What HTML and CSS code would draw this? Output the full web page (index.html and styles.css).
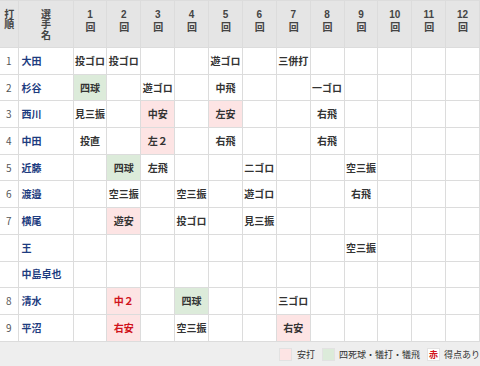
FILE: index.html
```html
<!DOCTYPE html>
<html lang="ja">
<head>
<meta charset="utf-8">
<link rel="stylesheet" href="styles.css">
</head>
<body>
<table class="score">
<colgroup><col class="c-order"><col class="c-name"><col span="12"></colgroup>
<thead>
<tr>
<th><span class="vt">打順</span></th><th><span class="vt">選手名</span></th>
<th><span class="num">1</span><span class="vt">回</span></th>
<th><span class="num">2</span><span class="vt">回</span></th>
<th><span class="num">3</span><span class="vt">回</span></th>
<th><span class="num">4</span><span class="vt">回</span></th>
<th><span class="num">5</span><span class="vt">回</span></th>
<th><span class="num">6</span><span class="vt">回</span></th>
<th><span class="num">7</span><span class="vt">回</span></th>
<th><span class="num">8</span><span class="vt">回</span></th>
<th><span class="num">9</span><span class="vt">回</span></th>
<th><span class="num">10</span><span class="vt">回</span></th>
<th><span class="num">11</span><span class="vt">回</span></th>
<th><span class="num">12</span><span class="vt">回</span></th>
</tr>
</thead>
<tbody>
<tr><td class="no">1</td><td class="nm">大田</td><td>投ゴロ</td><td>投ゴロ</td><td></td><td></td><td>遊ゴロ</td><td></td><td>三併打</td><td></td><td></td><td></td><td></td><td></td></tr>
<tr><td class="no">2</td><td class="nm">杉谷</td><td class="walk">四球</td><td></td><td>遊ゴロ</td><td></td><td>中飛</td><td></td><td></td><td>一ゴロ</td><td></td><td></td><td></td><td></td></tr>
<tr><td class="no">3</td><td class="nm">西川</td><td>見三振</td><td></td><td class="hit">中安</td><td></td><td class="hit">左安</td><td></td><td></td><td>右飛</td><td></td><td></td><td></td><td></td></tr>
<tr><td class="no">4</td><td class="nm">中田</td><td>投直</td><td></td><td class="hit">左２</td><td></td><td>右飛</td><td></td><td></td><td>右飛</td><td></td><td></td><td></td><td></td></tr>
<tr><td class="no">5</td><td class="nm">近藤</td><td></td><td class="walk">四球</td><td>左飛</td><td></td><td></td><td>二ゴロ</td><td></td><td></td><td>空三振</td><td></td><td></td><td></td></tr>
<tr><td class="no">6</td><td class="nm">渡邉</td><td></td><td>空三振</td><td></td><td>空三振</td><td></td><td>遊ゴロ</td><td></td><td></td><td>右飛</td><td></td><td></td><td></td></tr>
<tr><td class="no">7</td><td class="nm">横尾</td><td></td><td class="hit">遊安</td><td></td><td>投ゴロ</td><td></td><td>見三振</td><td></td><td></td><td></td><td></td><td></td><td></td></tr>
<tr><td class="no"></td><td class="nm">王</td><td></td><td></td><td></td><td></td><td></td><td></td><td></td><td></td><td>空三振</td><td></td><td></td><td></td></tr>
<tr><td class="no"></td><td class="nm">中島卓也</td><td></td><td></td><td></td><td></td><td></td><td></td><td></td><td></td><td></td><td></td><td></td><td></td></tr>
<tr><td class="no">8</td><td class="nm">清水</td><td></td><td class="hit red">中２</td><td></td><td class="walk">四球</td><td></td><td></td><td>三ゴロ</td><td></td><td></td><td></td><td></td><td></td></tr>
<tr><td class="no">9</td><td class="nm">平沼</td><td></td><td class="hit red">右安</td><td></td><td>空三振</td><td></td><td></td><td class="hit">右安</td><td></td><td></td><td></td><td></td><td></td></tr>
</tbody>
</table>
<div class="legend">
<span class="sw sw-hit"></span><span class="lt">安打</span>
<span class="sw sw-walk"></span><span class="lt">四死球・犠打・犠飛</span>
<span class="sw sw-red">赤</span><span class="lt">得点あり</span>
</div>
</body>
</html>
```
FILE: styles.css
```css
html, body {
  margin: 0;
  padding: 0;
  background: #eeeeee;
}
body {
  font-family: "Noto Sans CJK JP", "Noto Sans", sans-serif;
  font-size: 10px;
  color: #333;
  width: 480px;
  overflow: hidden;
}
.score {
  border-collapse: collapse;
  table-layout: fixed;
  width: 480px;
  background: #fff;
}
.c-order { width: 18px; }
.c-name { width: 55px; }
.score th, .score td {
  border: 1px solid #dcdcdc;
  padding: 0;
  text-align: center;
  white-space: nowrap;
  overflow: hidden;
}
.score th {
  background: #e5e5e5;
  font-weight: bold;
  vertical-align: top;
  padding-top: 8px;
  height: 38px;
  color: #444;
}
.vt {
  display: inline-block;
  writing-mode: vertical-rl;
  text-orientation: upright;
  letter-spacing: 0.7px;
  line-height: 12px;
}
.num {
  display: block;
  font-family: "Liberation Sans", Arial, sans-serif;
  line-height: 11px;
  margin-bottom: 0.4px;
}
.score td {
  height: 25.7px;
  font-weight: bold;
  line-height: 12px;
  color: #333;
}
.score thead tr th:first-child, .score tbody tr td:first-child { border-left: none; }
.score td.no {
  font-weight: normal;
  color: #555;
}
.score td.nm {
  text-align: left;
  padding-left: 3px;
  color: #1d3c80;
}
.score td.hit { background: #fde4e4; }
.score td.walk { background: #dcebda; }
.score td.red { color: #d0121b; }
.legend {
  display: flex;
  justify-content: flex-end;
  align-items: center;
  height: 25px;
  white-space: nowrap;
  font-size: 9px;
  color: #333;
}
.sw {
  width: 13px;
  height: 13px;
  border: 1px solid #e2e2e2;
  margin-right: 5px;
  box-sizing: border-box;
}
.sw-hit { background: #fde4e4; }
.sw-walk { background: #dcebda; margin-right: 4px; }
.sw-red {
  background: #fff;
  color: #d0121b;
  font-weight: bold;
  line-height: 11px;
  text-align: center;
  margin-right: 4px;
}
.lt { margin-right: 7px; }
.lt:last-child { margin-right: 0; }
```
